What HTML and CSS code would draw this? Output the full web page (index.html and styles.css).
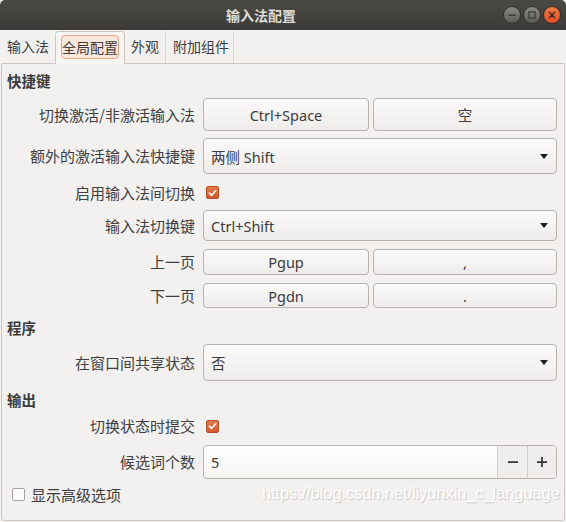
FILE: index.html
```html
<!DOCTYPE html>
<html lang="zh">
<head>
<meta charset="utf-8">
<title>输入法配置</title>
<link rel="stylesheet" href="styles.css">
</head>
<body>
<div class="window">
  <div class="titlebar">
    <div class="title">输入法配置</div>
    <div class="wbtns">
      <span class="wb"><svg width="18" height="18" viewBox="0 0 18 18"><rect x="5" y="8.5" width="8" height="1.5" fill="#3a3935"/></svg></span>
      <span class="wb"><svg width="18" height="18" viewBox="0 0 18 18"><rect x="5.5" y="5.5" width="7" height="7" fill="none" stroke="#3a3935" stroke-width="1.3"/></svg></span>
      <span class="wb close"><svg width="18" height="18" viewBox="0 0 18 18"><path d="M6 6 L12 12 M12 6 L6 12" stroke="#3a2a22" stroke-width="1.6" stroke-linecap="round"/></svg></span>
    </div>
  </div>
  <div class="tabs">
    <div class="tab t1">输入法</div>
    <div class="tab active"><span class="focus">全局配置</span></div>
    <div class="tab t3">外观</div>
    <div class="tab t4">附加组件</div>
  </div>
  <div class="frame">
    <div class="heading h1">快捷键</div>
    <div class="row r1">
      <div class="lbl">切换激活/非激活输入法</div>
      <div class="field two"><div class="btn">Ctrl+Space</div><div class="btn">空</div></div>
    </div>
    <div class="row r2">
      <div class="lbl">额外的激活输入法快捷键</div>
      <div class="field"><div class="combo"><span>两侧 Shift</span><i class="arrow"></i></div></div>
    </div>
    <div class="row r3">
      <div class="lbl">启用输入法间切换</div>
      <div class="field"><span class="check on"><svg width="12" height="12" viewBox="0 0 12 12"><path d="M2.6 6.2 L5 8.5 L9.5 3.6" fill="none" stroke="#fff" stroke-width="1.8" stroke-linecap="round" stroke-linejoin="round"/></svg></span></div>
    </div>
    <div class="row r4">
      <div class="lbl">输入法切换键</div>
      <div class="field"><div class="combo"><span>Ctrl+Shift</span><i class="arrow"></i></div></div>
    </div>
    <div class="row r5">
      <div class="lbl">上一页</div>
      <div class="field two"><div class="btn">Pgup</div><div class="btn">,</div></div>
    </div>
    <div class="row r6">
      <div class="lbl">下一页</div>
      <div class="field two"><div class="btn">Pgdn</div><div class="btn">.</div></div>
    </div>
    <div class="heading h2">程序</div>
    <div class="row r7">
      <div class="lbl">在窗口间共享状态</div>
      <div class="field"><div class="combo"><span>否</span><i class="arrow"></i></div></div>
    </div>
    <div class="heading h3">输出</div>
    <div class="row r8">
      <div class="lbl">切换状态时提交</div>
      <div class="field"><span class="check on"><svg width="12" height="12" viewBox="0 0 12 12"><path d="M2.6 6.2 L5 8.5 L9.5 3.6" fill="none" stroke="#fff" stroke-width="1.8" stroke-linecap="round" stroke-linejoin="round"/></svg></span></div>
    </div>
    <div class="row r9">
      <div class="lbl">候选词个数</div>
      <div class="field"><div class="spin"><span class="spinval">5</span><span class="sbtn"><svg width="12" height="12" viewBox="0 0 12 12"><rect x="1" y="5.2" width="10" height="1.8" fill="#3a3a3a"/></svg></span><span class="sbtn"><svg width="12" height="12" viewBox="0 0 12 12"><rect x="1" y="5.2" width="10" height="1.8" fill="#3a3a3a"/><rect x="5.1" y="1" width="1.8" height="10" fill="#3a3a3a"/></svg></span></div></div>
    </div>
    <div class="adv"><span class="check"></span><span class="advtext">显示高级选项</span></div>
  </div>
  <div class="watermark">https://blog.csdn.net/liyunxin_c_language</div>
</div>
</body>
</html>
```

FILE: styles.css
```css
* { box-sizing: border-box; }
html, body { margin: 0; padding: 0; }
body {
  width: 566px;
  height: 522px;
  background: #f2f1f0;
  font-family: "Noto Sans", "Noto Sans CJK SC", sans-serif;
  color: #3c3c3c;
  overflow: hidden;
}
.window {
  position: relative;
  width: 566px;
  height: 522px;
  background: #f2f1f0;
}
.titlebar {
  height: 30px;
  display: grid;
  grid-template-columns: 1fr 63px;
  align-items: center;
  background: linear-gradient(#4a4944, #3c3b37);
  border-radius: 5px 5px 0 0;
}
.title {
  padding-left: 19px;
  text-align: center;
  font-family: "Noto Sans CJK SC", sans-serif;
  font-weight: bold;
  font-size: 14px;
  line-height: 30px;
  color: #dfdbd2;
}
.wbtns {
  display: flex;
  gap: 2px;
}
.wb {
  width: 18px;
  height: 18px;
  border-radius: 50%;
  background: linear-gradient(#8a8984, #5d5c58);
  border: 1px solid #33322f;
  display: flex;
  align-items: center;
  justify-content: center;
}
.wb svg { display: block; }
.wb.close {
  background: linear-gradient(#f27a4a, #e2501f);
  border-color: #3a2a22;
}
.tabs {
  height: 33px;
  display: flex;
  padding-top: 1px;
  font-family: "Noto Sans CJK SC", sans-serif;
  font-size: 14px;
  white-space: nowrap;
}
.tab {
  height: 32px;
  line-height: 30px;
  border-right: 1px solid #dcd8d4;
  color: #3c3c3c;
  flex: none;
}
.t1 { width: 55px; padding-left: 7px; border-right: none; }
.tab.active {
  width: 70px;
  background: #f6f5f4;
  border: 1px solid #cdc7c2;
  border-bottom: none;
  border-radius: 4px 4px 0 0;
  padding: 3px 0 0 5px;
  height: 33px;
  position: relative;
  z-index: 1;
}
.focus {
  display: block;
  width: 58px;
  height: 24px;
  line-height: 22px;
  border: 1px solid #eea383;
  border-radius: 4px;
  background: #fbe6dc;
  text-align: center;
}
.t3 { width: 41px; padding-left: 6px; }
.t4 { width: 68px; padding-left: 7px; }
.frame {
  margin: 0 1px 0 1px;
  height: 458px;
  border: 1px solid #cdc7c2;
  border-radius: 0 0 3px 3px;
  padding: 0 7px 0 0;
  display: flex;
  flex-direction: column;
}
.heading {
  height: 22px;
  line-height: 22px;
  padding-left: 5px;
  font-family: "Noto Sans CJK SC", sans-serif;
  font-weight: bold;
  font-size: 14.5px;
  color: #3c3c3c;
}
.row {
  display: grid;
  grid-template-columns: 193px 1fr;
  column-gap: 8px;
  align-items: center;
}
.lbl {
  text-align: right;
  font-family: "Noto Sans CJK SC", sans-serif;
  font-size: 15px;
  line-height: 20px;
  color: #404040;
  white-space: nowrap;
}
.field { height: 100%; display: flex; align-items: center; }
.field.two { gap: 4px; }
.field.two .btn:first-child { width: 166px; }
.field.two .btn:last-child { flex: 1; }
.btn, .combo, .spin {
  height: 100%;
  border: 1px solid #b8b2ac;
  border-radius: 4px;
  background: linear-gradient(#fbfafa, #efedeb);
  font-size: 14.5px;
  color: #3c3c3c;
}
.btn {
  display: flex;
  align-items: center;
  justify-content: center;
}
.combo {
  width: 100%;
  display: flex;
  align-items: center;
  justify-content: space-between;
  padding: 0 8px 0 7px;
}
.arrow {
  width: 0;
  height: 0;
  border-left: 4px solid transparent;
  border-right: 4px solid transparent;
  border-top: 5px solid #1e1e1e;
}
.h1 { margin-top: 6px; }
.r1 { margin-top: 6px; height: 33px; }
.r2 { margin-top: 7px; height: 36px; }
.r3 { margin-top: 8px; height: 21px; }
.r4 { margin-top: 7px; height: 31px; }
.r5 { margin-top: 8px; height: 26px; }
.r6 { margin-top: 8px; height: 25px; }
.h2 { margin-top: 9px; }
.r7 { margin-top: 5px; height: 37px; }
.h3 { margin-top: 8px; }
.r8 { margin-top: 5px; height: 20px; }
.r9 { margin-top: 9px; height: 34px; }
.check {
  width: 13px;
  height: 13px;
  border-radius: 2px;
  border: 1px solid #a9a39d;
  background: #fcfcfc;
  display: flex;
  align-items: center;
  justify-content: center;
}
.check.on {
  margin-left: 3px;
  background: linear-gradient(#e07a50, #cf5b2c);
  border-color: #b44d24;
}
.check svg { display: block; }
.spin {
  width: 100%;
  display: flex;
  align-items: stretch;
  background: linear-gradient(#ffffff, #f6f5f4);
}
.spinval {
  flex: 1;
  display: flex;
  align-items: center;
  padding-left: 7px;
}
.sbtn {
  width: 30px;
  border-left: 1px solid #d3ceca;
  background: #f0eeec;
  display: flex;
  align-items: center;
  justify-content: center;
}
.sbtn:last-child { width: 29px; border-radius: 0 3px 3px 0; }
.adv {
  margin-top: 5px;
  height: 20px;
  display: flex;
  align-items: center;
  padding-left: 10px;
  gap: 6px;
}
.advtext {
  font-family: "Noto Sans CJK SC", sans-serif;
  font-size: 15px;
  color: #3c3c3c;
}
.watermark {
  position: absolute;
  left: 262px;
  top: 483px;
  font-family: "Liberation Sans", Arial, sans-serif;
  font-size: 16.5px;
  line-height: 20px;
  color: #ffffff;
  text-shadow: 1px 1px 1px rgba(0, 0, 0, 0.18);
  letter-spacing: -0.1px;
}
```
